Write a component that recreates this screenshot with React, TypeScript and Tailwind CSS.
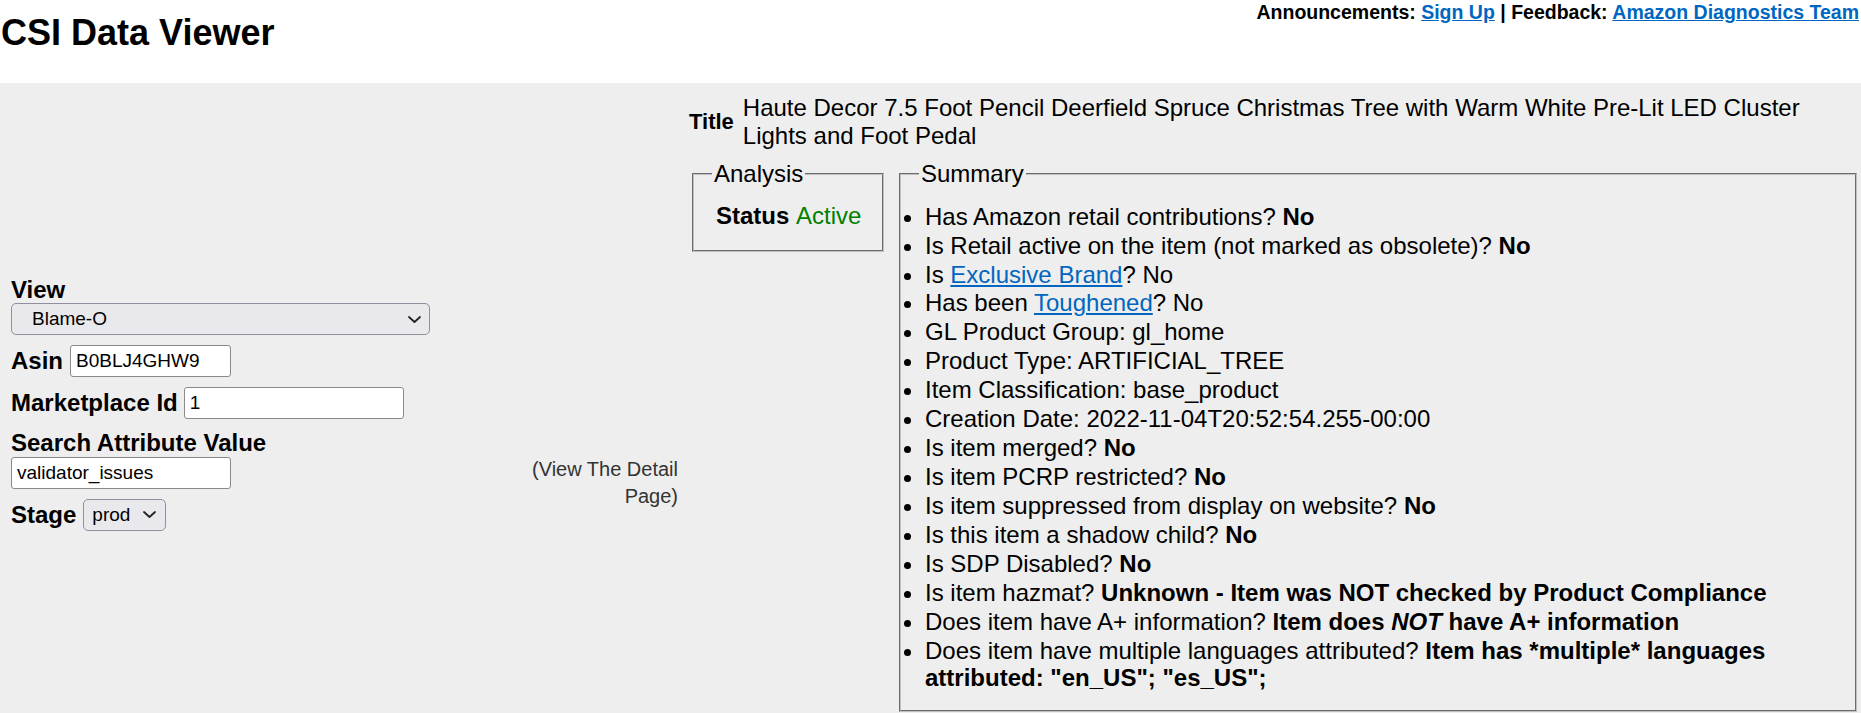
import React from "react";

const link = "text-[#0066c0] underline";

type SummaryItem = { key: string; body: React.ReactNode };

const summaryItems: SummaryItem[] = [
  { key: "retail", body: <>Has Amazon retail contributions? <b>No</b></> },
  { key: "active", body: <>Is Retail active on the item (not marked as obsolete)? <b>No</b></> },
  { key: "exclusive", body: <>Is <a href="#" className={link}>Exclusive Brand</a>? No</> },
  { key: "toughened", body: <>Has been <a href="#" className={link}>Toughened</a>? No</> },
  { key: "gl", body: <>GL Product Group: gl_home</> },
  { key: "ptype", body: <>Product Type: ARTIFICIAL_TREE</> },
  { key: "class", body: <>Item Classification: base_product</> },
  { key: "created", body: <>Creation Date: 2022-11-04T20:52:54.255-00:00</> },
  { key: "merged", body: <>Is item merged? <b>No</b></> },
  { key: "pcrp", body: <>Is item PCRP restricted? <b>No</b></> },
  { key: "suppressed", body: <>Is item suppressed from display on website? <b>No</b></> },
  { key: "shadow", body: <>Is this item a shadow child? <b>No</b></> },
  { key: "sdp", body: <>Is SDP Disabled? <b>No</b></> },
  { key: "hazmat", body: <>Is item hazmat? <b>Unknown - Item was NOT checked by Product Compliance</b></> },
  { key: "aplus", body: <>Does item have A+ information? <b>Item does <i>NOT</i> have A+ information</b></> },
  {
    key: "lang",
    body: (
      <>
        Does item have multiple languages attributed?{" "}
        <b>Item has *multiple* languages attributed: "en_US"; "es_US";</b>
      </>
    ),
  },
];

function Chevron() {
  return (
    <svg width="13" height="7" viewBox="0 0 13 7" fill="none">
      <path d="M1 1l5.5 5 5.5-5" stroke="#222" strokeWidth="1.8" strokeLinecap="round" strokeLinejoin="round" />
    </svg>
  );
}

function FakeSelect({ value, className }: { value: string; className: string }) {
  return (
    <div
      className={`flex h-[32px] items-center justify-between rounded-[5px] border border-[#8f8f9d] bg-[#e9e9ed] text-[19px] ${className}`}
    >
      <span>{value}</span>
      <Chevron />
    </div>
  );
}

function TextBox({ value, width }: { value: string; width: string }) {
  return (
    <input
      defaultValue={value}
      className={`h-[32px] rounded-[3px] border border-[#8a8a8a] bg-white px-[5px] text-[19px] text-black outline-none ${width}`}
    />
  );
}

const label = "text-[24px] font-bold leading-[27.6px]";
const fieldset =
  "border-2 border-[#c0c0c0] [border-style:groove] px-[18px] pt-[8.4px] pb-[15px]";

export default function App() {
  return (
    <div className="min-h-screen bg-white font-['Liberation_Sans',Arial,sans-serif] text-black">
      <header className="flex h-[83px] items-start justify-between">
        <h1 className="mt-[12px] pl-[1px] text-[36px] font-bold leading-[41px]">CSI Data Viewer</h1>
        <div className="mt-[1px] pr-[2px] text-[19.5px] font-bold leading-[22px]">
          Announcements: <a href="#" className={link}>Sign Up</a> | Feedback:{" "}
          <a href="#" className={link}>Amazon Diagnostics Team</a>
        </div>
      </header>

      <main className="flex bg-[#eeeeee] py-[11px]">
        {/* query form */}
        <div className="flex w-[528px] shrink-0 flex-col self-center pl-[11px]">
          <div className={label}>View</div>
          <FakeSelect value="Blame-O" className="w-[419px] pl-[20px] pr-[8px]" />

          <div className="mt-[10px] flex items-center gap-[7px]">
            <span className={label}>Asin</span>
            <TextBox value="B0BLJ4GHW9" width="w-[161px]" />
          </div>

          <div className="mt-[10px] flex items-center gap-[6px]">
            <span className={label}>Marketplace Id</span>
            <TextBox value="1" width="w-[220px]" />
          </div>

          <div className={`mt-[10px] ${label}`}>Search Attribute Value</div>
          <TextBox value="validator_issues" width="w-[220px]" />

          <div className="mt-[10px] flex items-center gap-[7px]">
            <span className={label}>Stage</span>
            <FakeSelect value="prod" className="w-[83px] pl-[8px] pr-[9px]" />
          </div>
        </div>

        <div className="mt-[160px] w-[150px] shrink-0 self-center text-right text-[20px] leading-[27px] text-[#333]">
          (View The Detail Page)
        </div>

        {/* item details */}
        <div className="ml-[11px] flex min-w-0 flex-1 flex-col pr-[4px]">
          <div className="flex items-center gap-[9px]">
            <span className="text-[22px] font-bold">Title</span>
            <span className="flex-1 text-[24px] leading-[27.6px]">
              Haute Decor 7.5 Foot Pencil Deerfield Spruce Christmas Tree with Warm White Pre-Lit LED Cluster Lights
              and Foot Pedal
            </span>
          </div>

          <div className="mt-[11px] flex items-start gap-[15px] pl-[3px] text-[24px] leading-[27.6px]">
            <fieldset className={`w-[192px] shrink-0 ${fieldset}`}>
              <legend className="px-[2px]">Analysis</legend>
              <div className="flex h-[39px] items-center pl-[4px]">
                <b>Status</b>&nbsp;<span className="text-[#008000]">Active</span>
              </div>
            </fieldset>

            <fieldset className={`min-w-0 flex-1 ${fieldset}`}>
              <legend className="px-[2px]">Summary</legend>
              <ul className="mt-[6.5px] mb-[3.5px] list-disc pl-[6px]">
                {summaryItems.map((item) => (
                  <li key={item.key} className="mb-[1.35px] last:mb-0">
                    {item.body}
                  </li>
                ))}
              </ul>
            </fieldset>
          </div>
        </div>
      </main>
    </div>
  );
}
